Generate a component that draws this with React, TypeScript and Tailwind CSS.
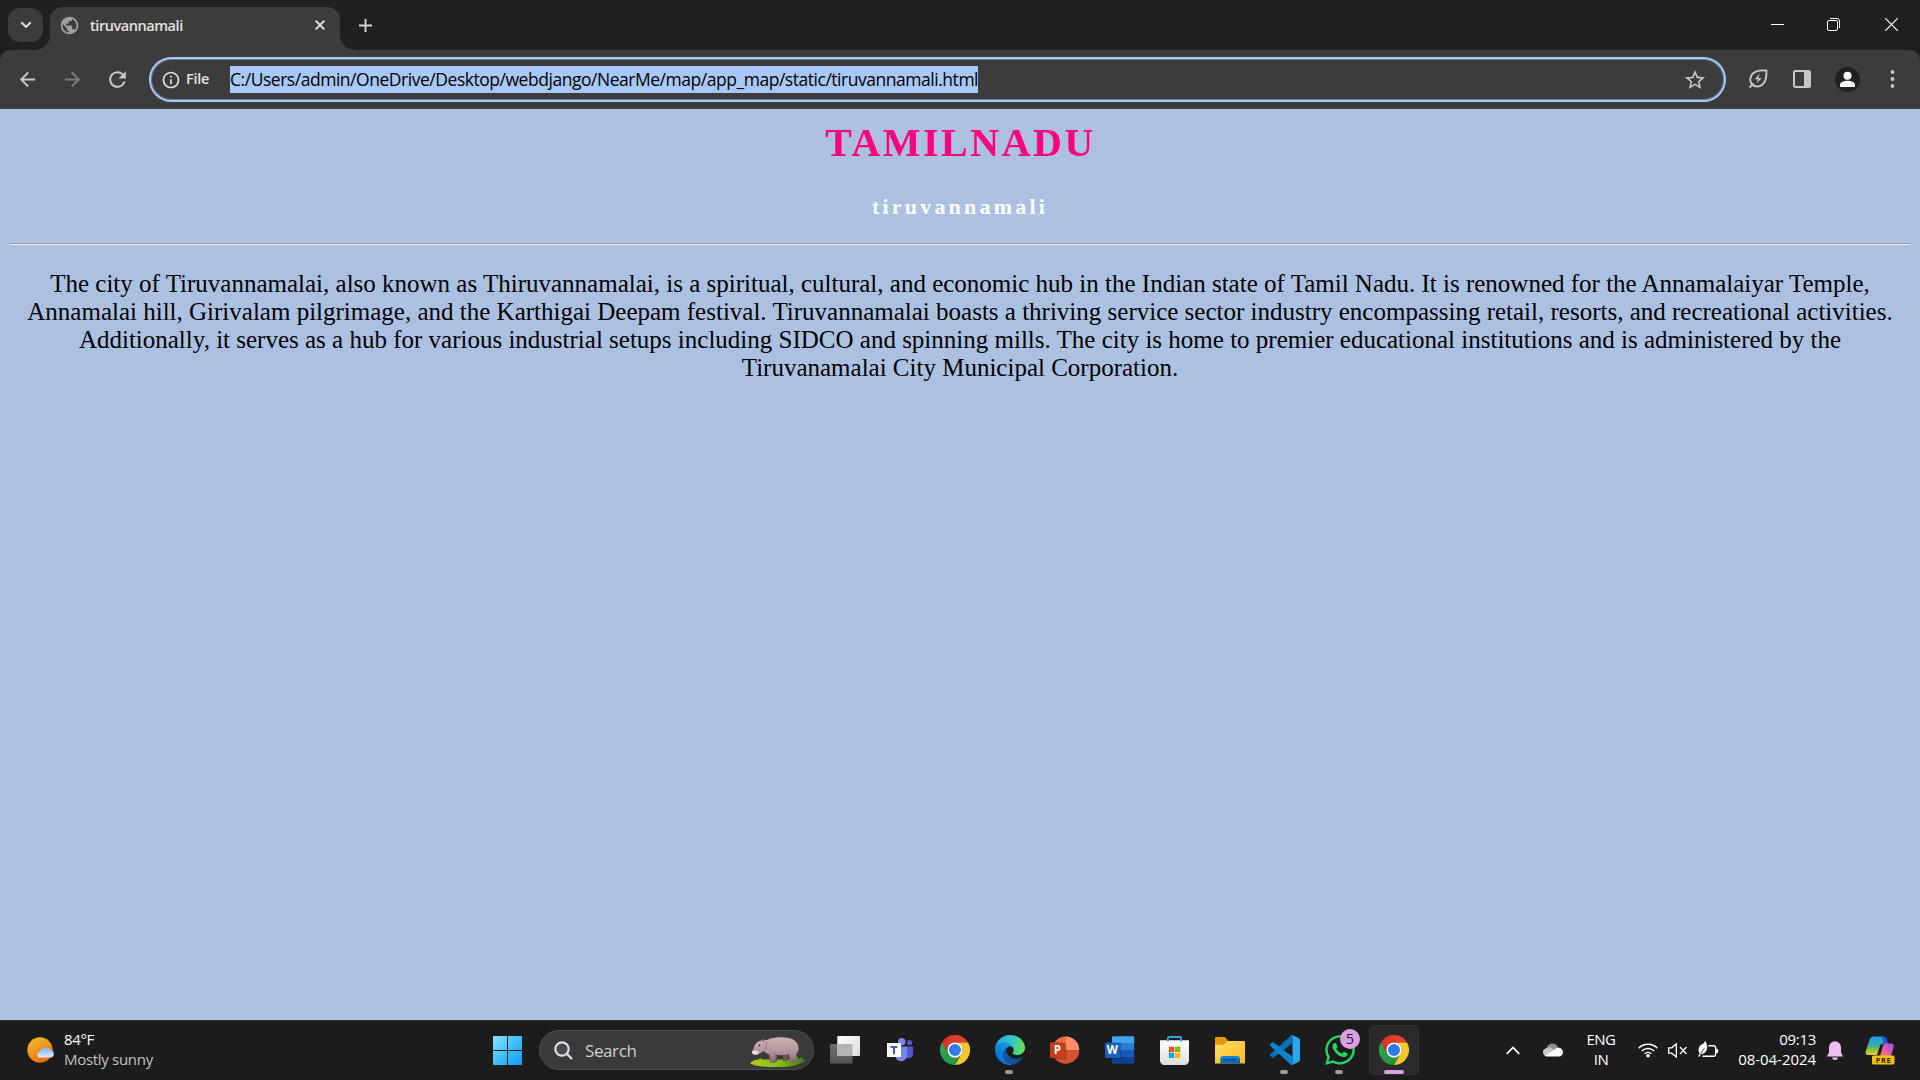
import React from "react";
import {
  MdArrowBack,
  MdArrowForward,
  MdInfoOutline,
  MdPublic,
  MdRefresh,
  MdStarBorder,
} from "react-icons/md";
import { FaWhatsapp } from "react-icons/fa";

/* ---------- Taskbar icons ---------- */

function WindowsIcon() {
  return (
    <svg width="30" height="30" viewBox="0 0 30 30">
      <defs>
        <linearGradient id="win" x1="0" y1="0" x2="30" y2="30" gradientUnits="userSpaceOnUse">
          <stop offset="0" stopColor="#8fe3ff" />
          <stop offset="0.5" stopColor="#3fc1fb" />
          <stop offset="1" stopColor="#0d97f8" />
        </linearGradient>
      </defs>
      <path
        fill="url(#win)"
        d="M1 1H14V15H0V2a1 1 0 0 1 1-1zM15 1H28a1 1 0 0 1 1 1V15H15zM0 16H14V30H1a1 1 0 0 1-1-1zM15 16H29V29a1 1 0 0 1-1 1H15z"
      />
    </svg>
  );
}

function TaskViewIcon() {
  return (
    <svg width="30" height="30" viewBox="0 0 30 30">
      <defs>
        <linearGradient id="tvA" x1="0" y1="0" x2="1" y2="1">
          <stop offset="0" stopColor="#ffffff" />
          <stop offset="1" stopColor="#dcdcdc" />
        </linearGradient>
        <linearGradient id="tvB" x1="0" y1="0" x2="0" y2="1">
          <stop offset="0" stopColor="#6e6e6e" />
          <stop offset="1" stopColor="#565656" />
        </linearGradient>
      </defs>
      <rect x="0" y="9" width="22.5" height="19.5" rx="1" fill="url(#tvB)" />
      <rect x="7.3" y="1" width="22.7" height="20" rx="1" fill="url(#tvA)" />
      <path d="M7.3 9H22.5V21H8.3a1 1 0 0 1-1-1z" fill="#b4b4b4" />
    </svg>
  );
}

function TeamsIcon() {
  return (
    <svg width="30" height="30" viewBox="0 0 30 30">
      <circle cx="16.8" cy="6.8" r="3.7" fill="#7b83eb" />
      <circle cx="24.6" cy="7.6" r="2.6" fill="#5059c9" />
      <path d="M21.5 11.5h6.6v7.2a4.6 4.6 0 0 1-6.6 4z" fill="#5059c9" />
      <path d="M10 11.5h12.2v8.6a6.1 6.1 0 0 1-12.2 0z" fill="#7b83eb" />
      <rect x="2" y="8" width="14" height="14" fill="#fff" />
      <path d="M5.6 11h6.8v1.9H10v6.4H8v-6.4H5.6z" fill="#4b53bc" />
    </svg>
  );
}

function ChromeIcon() {
  return (
    <svg width="30" height="30" viewBox="0 0 48 48">
      <defs>
        <linearGradient id="chR" x1="0" y1="0" x2="1" y2="0">
          <stop offset="0" stopColor="#d93025" />
          <stop offset="1" stopColor="#ea4335" />
        </linearGradient>
        <linearGradient id="chG" x1="1" y1="1" x2="0" y2="0">
          <stop offset="0" stopColor="#1e8e3e" />
          <stop offset="1" stopColor="#34a853" />
        </linearGradient>
      </defs>
      <path d="M3.2 12A24 24 0 0 1 44.8 12H24A12 12 0 0 0 13.6 30z" fill="url(#chR)" />
      <path d="M3.2 12A24 24 0 0 0 24 48L34.4 30A12 12 0 0 1 13.6 30z" fill="url(#chG)" />
      <path d="M44.8 12A24 24 0 0 1 24 48L34.4 30A12 12 0 0 0 24 12z" fill="#fcc629" />
      <circle cx="24" cy="24" r="12.2" fill="#fff" />
      <circle cx="24" cy="24" r="9.6" fill="#2f7bea" />
    </svg>
  );
}

function EdgeIcon() {
  return (
    <svg width="30" height="30" viewBox="0 0 256 256">
      <defs>
        <linearGradient id="edA" x1="58" y1="177" x2="237" y2="177" gradientUnits="userSpaceOnUse">
          <stop offset="0" stopColor="#0c59a4" />
          <stop offset="1" stopColor="#114a8b" />
        </linearGradient>
        <linearGradient id="edB" x1="157" y1="100" x2="46" y2="221" gradientUnits="userSpaceOnUse">
          <stop offset="0" stopColor="#1b9de2" />
          <stop offset="0.16" stopColor="#1595df" />
          <stop offset="0.67" stopColor="#0680d7" />
          <stop offset="1" stopColor="#0078d4" />
        </linearGradient>
        <linearGradient id="edC" x1="10" y1="60" x2="250" y2="110" gradientUnits="userSpaceOnUse">
          <stop offset="0" stopColor="#2ba9e3" />
          <stop offset="0.5" stopColor="#2fc2cf" />
          <stop offset="0.8" stopColor="#4bd884" />
          <stop offset="1" stopColor="#6be050" />
        </linearGradient>
      </defs>
      <path fill="url(#edA)" d="M231.07 190.54c-3.4 1.78-6.92 3.33-10.54 4.63a101.88 101.88 0 0 1-35.9 6.46c-47.31 0-88.52-32.54-88.52-74.31A31.48 31.48 0 0 1 112.54 99.9c-42.8 1.8-53.8 46.4-53.8 72.53 0 73.88 68.09 81.37 82.76 81.37 7.91 0 19.84-2.3 27-4.56l1.31-.44a128.34 128.34 0 0 0 66.6-52.8 4 4 0 0 0-5.34-5.46z" />
      <path fill="url(#edB)" d="M105.73 241.42a79.2 79.2 0 0 1-22.74-21.34 80.72 80.72 0 0 1 29.55-120.18c3.12-1.47 8.45-4.13 15.54-4a32.35 32.35 0 0 1 25.69 13 31.88 31.88 0 0 1 6.36 18.66c0-.21 24.46-79.6-80-79.6-43.9 0-80 41.66-80 78.21a130.15 130.15 0 0 0 12.11 56 128 128 0 0 0 156.38 67.11 75.55 75.55 0 0 1-62.78-8z" />
      <path fill="url(#edC)" d="M152.33 148.86c-.81 1.05-3.3 2.5-3.3 5.66 0 2.61 1.7 5.12 4.72 7.23 14.38 10 41.49 8.68 41.56 8.68a59.56 59.56 0 0 0 30.27-8.35A61.38 61.38 0 0 0 256 109.18c.26-22.41-8-37.31-11.34-43.91C223.46 23.84 177.72 0 128 0A128 128 0 0 0 0 126.2c.48-36.54 36.8-66.05 80-66.05 3.5 0 23.46.34 42 10.07 16.34 8.58 24.9 18.94 30.85 29.21 6.18 10.67 7.28 24.15 7.28 29.52 0 5.37-2.74 13.33-7.8 19.91z" />
    </svg>
  );
}

function OfficeLetter({ children }: { children: string }) {
  return (
    <text x="7.4" y="19" textAnchor="middle" fontFamily="Open Sans, sans-serif" fontWeight="700" fontSize="11.5" fill="#fff">
      {children}
    </text>
  );
}

function PowerPointIcon() {
  return (
    <svg width="30" height="30" viewBox="0 0 30 30">
      <circle cx="15.6" cy="15" r="13.6" fill="#ed6c47" />
      <path d="M15.6 1.4A13.6 13.6 0 0 1 29.2 15H15.6z" fill="#ff8f6b" />
      <path d="M2 15A13.6 13.6 0 0 0 29.2 15z" fill="#d35230" />
      <rect x="2.5" y="8.2" width="14" height="16" rx="1.5" fill="#000" opacity="0.2" />
      <rect x="0" y="7.5" width="15.3" height="15.5" rx="1.4" fill="#c43e1c" />
      <OfficeLetter>P</OfficeLetter>
    </svg>
  );
}

function WordIcon() {
  return (
    <svg width="30" height="30" viewBox="0 0 30 30">
      <path d="M7 2.4a1.2 1.2 0 0 1 1.2-1.2H28a1.2 1.2 0 0 1 1.2 1.2V8H7z" fill="#41a5ee" />
      <rect x="7" y="8" width="22.2" height="7" fill="#2b7cd3" />
      <rect x="7" y="15" width="22.2" height="7" fill="#185abd" />
      <path d="M7 22h22.2v5.6a1.2 1.2 0 0 1-1.2 1.2H8.2A1.2 1.2 0 0 1 7 27.6z" fill="#103f91" />
      <rect x="7" y="8" width="9.5" height="16" rx="1" fill="#000" opacity="0.2" />
      <rect x="0" y="7.5" width="15.3" height="15.5" rx="1.4" fill="#1b5dbf" />
      <OfficeLetter>W</OfficeLetter>
    </svg>
  );
}

function StoreIcon() {
  return (
    <svg width="30" height="30" viewBox="0 0 30 30">
      <defs>
        <linearGradient id="store" x1="0" y1="0" x2="0" y2="1">
          <stop offset="0" stopColor="#ffffff" />
          <stop offset="1" stopColor="#dedede" />
        </linearGradient>
      </defs>
      <path d="M0 5.3H29V25.5a4.5 4.5 0 0 1-4.5 4.5H4.5a4.5 4.5 0 0 1-4.5-4.5z" fill="url(#store)" />
      <path d="M7.9 6.5V3a1 1 0 0 1 1-1H20.1a1 1 0 0 1 1 1V6.5" fill="none" stroke="#26a9e6" strokeWidth="1.8" />
      <rect x="8.9" y="11.7" width="5.3" height="5.3" fill="#f25022" />
      <rect x="15" y="11.7" width="5.3" height="5.3" fill="#7fba00" />
      <rect x="8.9" y="17.8" width="5.3" height="5.3" fill="#00a4ef" />
      <rect x="15" y="17.8" width="5.3" height="5.3" fill="#ffb900" />
    </svg>
  );
}

function FolderIcon() {
  return (
    <svg width="30" height="30" viewBox="0 0 30 30">
      <defs>
        <linearGradient id="fold" x1="0" y1="0" x2="1" y2="1">
          <stop offset="0" stopColor="#ffdc6b" />
          <stop offset="1" stopColor="#fbbc1c" />
        </linearGradient>
        <linearGradient id="foldB" x1="0" y1="0" x2="0" y2="1">
          <stop offset="0" stopColor="#1389da" />
          <stop offset="1" stopColor="#0b62ae" />
        </linearGradient>
      </defs>
      <path d="M0 3.3A1.3 1.3 0 0 1 1.3 2H9.8l3.2 3.6V10H0z" fill="#e09c08" />
      <path d="M0 9.8H8.8L13 6H28.7A1.3 1.3 0 0 1 30 7.3V28.5H0z" fill="url(#fold)" />
      <path d="M5.3 28.5V24a3 3 0 0 1 3-3H22a3 3 0 0 1 3 3v4.5z" fill="url(#foldB)" />
      <rect x="8.3" y="24" width="13.5" height="1.3" fill="#0a4686" />
    </svg>
  );
}

function VSCodeIcon() {
  return (
    <svg width="30" height="30" viewBox="0 0 24 24">
      <path d="M18.004 6.552 3 18a1 1 0 0 1-1.35-.06L.327 16.74a1 1 0 0 1 0-1.48L16.505.5a1.5 1.5 0 0 1 1.5.9z" fill="#0b6fb8" />
      <path d="M18.004 17.448 2.925 6.002a1 1 0 0 0-1.276.057L.327 7.261A1 1 0 0 0 .326 8.74L16.506 23.5a1.5 1.5 0 0 0 1.5-.5z" fill="#1083cf" />
      <path d="M23.15 2.587 18.21.21a1.494 1.494 0 0 0-1.705.29c.6-.4 1.499 0 1.499.9V22.6c0 .9-.9 1.3-1.498.9a1.492 1.492 0 0 0 1.704.29l4.942-2.377A1.5 1.5 0 0 0 24 20.06V3.939a1.5 1.5 0 0 0-.85-1.352z" fill="#2ba7ef" />
    </svg>
  );
}

function HippoIcon() {
  return (
    <svg width="56" height="32" viewBox="0 0 56 32">
      <defs>
        <linearGradient id="hip" x1="0" y1="0" x2="0" y2="1">
          <stop offset="0" stopColor="#cbb0b1" />
          <stop offset="0.5" stopColor="#b79a9d" />
          <stop offset="1" stopColor="#806568" />
        </linearGradient>
        <linearGradient id="grass" x1="0" y1="0" x2="1" y2="0">
          <stop offset="0" stopColor="#b5cf1e" />
          <stop offset="0.5" stopColor="#86bd1c" />
          <stop offset="1" stopColor="#3f7a1c" />
        </linearGradient>
      </defs>
      <path d="M0 27c3-2.5 6-3.500 9-3.500l1-1.500 2 1.500h30l5-5 1 4 5-1-1 2.500 4-.5c-4 5-14 7.500-28 7.500-12 0-24-.5-28-4z" fill="url(#grass)" />
      <path d="M33 16h5v9h-5zM24 17h3v9h-3z" fill="#6b5356" />
      <path d="M17 4C22 .5 40 0 44.500 4.500 50 9 49.500 14 46 18.500V26h-5.500l-2-8c-4 1.500-9 1.500-13 .5V27H19.500v-8c-3-1-4.500-3-5.500-4l-6 3.500c-3 1-6-.5-5.500-3L5 8.500C7 5 12 3.500 17 4z" fill="url(#hip)" />
      <path d="M2 15.500c1-1.500 5-1.500 7 1l-2 2c-3 1-5.500-.5-5-3z" fill="#f0dcd4" />
      <path d="M12 4.200c1-1.500 2.500-1 3 .3l-1 2.500z" fill="#9a7b80" />
      <path d="M17 6c-1 4-.5 9-3.500 9" fill="none" stroke="#94777b" strokeWidth="0.9" />
      <circle cx="9.5" cy="9.5" r="0.9" fill="#3b2b2e" />
    </svg>
  );
}

function WeatherIcon() {
  return (
    <svg width="28" height="26" viewBox="0 0 28 26">
      <defs>
        <linearGradient id="sun" x1="0.2" y1="0" x2="0.7" y2="1">
          <stop offset="0" stopColor="#f0be2e" />
          <stop offset="1" stopColor="#f2660e" />
        </linearGradient>
        <linearGradient id="cld" x1="0" y1="0" x2="0" y2="1">
          <stop offset="0" stopColor="#82adf0" />
          <stop offset="1" stopColor="#dbe9fd" />
        </linearGradient>
      </defs>
      <circle cx="13" cy="13" r="12.7" fill="url(#sun)" />
      <path d="M13.5 20.5a3 3 0 0 1-.3-6 5.600 5.600 0 0 1 10.300-1.500 3.900 3.900 0 0 1 .8 7.500z" fill="url(#cld)" />
    </svg>
  );
}

function CopilotIcon() {
  return (
    <svg width="30" height="30" viewBox="0 0 30 30">
      <defs>
        <linearGradient id="cpA" x1="0" y1="0" x2="0" y2="1">
          <stop offset="0" stopColor="#1f9df0" />
          <stop offset="0.45" stopColor="#35a9a0" />
          <stop offset="0.75" stopColor="#8bc53f" />
          <stop offset="1" stopColor="#f3c72b" />
        </linearGradient>
        <linearGradient id="cpB" x1="1" y1="0" x2="0" y2="1">
          <stop offset="0" stopColor="#8f54ea" />
          <stop offset="0.5" stopColor="#e358b5" />
          <stop offset="1" stopColor="#fb8350" />
        </linearGradient>
      </defs>
      <path d="M8.5 1.5H18c2 0 3 1 3.600 3L23 9h-5.500c-1.500 0-2.200.8-2.700 2.200L12 20H3c-2 0-2.800-1.500-2.300-3.500L4.500 5C5.200 2.700 6.500 1.500 8.500 1.500z" fill="url(#cpA)" />
      <path d="M16 1.500h2c2 0 3 1 3.600 3L23 9h-4.500c-1-3.500-.8-6.500-2.500-7.500z" fill="#1857d8" />
      <path d="M20 8.500h6.200c2.200 0 3 1.500 2.400 3.500L26 21H15l3-10c.4-1.500 1-2.500 2-2.500z" fill="url(#cpB)" />
      <rect x="7" y="20.5" width="22.5" height="9" rx="1.5" fill="#fbc00c" />
      <text x="18.5" y="27.7" textAnchor="middle" fontFamily="Open Sans, sans-serif" fontWeight="700" fontSize="7.4" letterSpacing="0.6" fill="#1c1c1c">
        PRE
      </text>
    </svg>
  );
}

/* ---------- Browser chrome ---------- */

function TabStrip() {
  return (
    <div className="flex h-[50px] bg-[#1f2121]">
      <button className="mt-2 ml-2 flex h-[34px] w-[35px] items-center justify-center rounded-[12px] bg-[#3c3c3c]">
        <svg width="12" height="8" viewBox="0 0 12 8" fill="none" stroke="#e3e3e3" strokeWidth="2">
          <path d="M1.3 1.2 6 5.9l4.7-4.7" />
        </svg>
      </button>
      <svg className="mt-auto -ml-[8px]" width="15" height="15" viewBox="0 0 15 15">
        <path d="M15 0V15H0A15 15 0 0 0 15 0z" fill="#3c3c3c" />
      </svg>
      <div className="mt-[7px] flex w-[290px] items-center rounded-t-[13px] bg-[#3c3c3c] pb-[7px] pl-[9px]">
        <MdPublic size={21} color="#9aa0a6" />
        <span className="mt-[2px] ml-[10px] text-[14.5px] font-semibold tracking-[-0.45px] text-[#e3e3e3]">tiruvannamali</span>
        <svg className="mr-[15px] ml-auto" width="10" height="10" viewBox="0 0 10 10" stroke="#e3e3e3" strokeWidth="1.9">
          <path d="M.7.7l8.6 8.6M9.3.7.7 9.3" />
        </svg>
      </div>
      <svg className="mt-auto" width="15" height="15" viewBox="0 0 15 15">
        <path d="M0 0V15H15A15 15 0 0 1 0 0z" fill="#3c3c3c" />
      </svg>
      <svg className="mt-[19px] ml-[4px]" width="13" height="13" viewBox="0 0 13 13" stroke="#d5d5d5" strokeWidth="1.9">
        <path d="M6.5 0V13M0 6.5H13" />
      </svg>
      <div className="ml-auto flex h-[49px] items-center">
        <div className="flex w-[57px] justify-center">
          <svg width="13" height="1" viewBox="0 0 13 1">
            <rect width="13" height="1" fill="#fff" />
          </svg>
        </div>
        <div className="flex w-[57px] justify-center pr-[2px]">
          <svg width="13" height="13" viewBox="0 0 13 13" fill="none" stroke="#fff" strokeWidth="1">
            <rect x="0.5" y="2.5" width="10" height="10" rx="1.5" />
            <path d="M3 .5h7a2.5 2.5 0 0 1 2.5 2.5v7" />
          </svg>
        </div>
        <div className="flex w-[57px] justify-center">
          <svg width="13" height="13" viewBox="0 0 13 13" stroke="#fff" strokeWidth="1.2">
            <path d="M.3.3l12.4 12.4M12.7.3.3 12.7" />
          </svg>
        </div>
      </div>
    </div>
  );
}

function ToolButton({ children }: { children: React.ReactNode }) {
  return <div className="flex w-[45px] justify-center pb-[1px]">{children}</div>;
}

function Toolbar() {
  return (
    <div className="bg-[#1f2121]">
      <div className="flex h-[59px] items-center rounded-t-[10px] bg-[#3c3c3c] pl-[5px]">
        <ToolButton>
          <MdArrowBack size={23} color="#c7c7c7" />
        </ToolButton>
        <ToolButton>
          <MdArrowForward size={23} color="#7b7b7b" />
        </ToolButton>
        <ToolButton>
          <MdRefresh size={25} color="#c7c7c7" />
        </ToolButton>
        <div className="ml-[9px] flex h-[45px] w-[1577px] items-center rounded-full border-2 border-[#a8c7fa] pr-[17px] pl-[10px] shadow-[inset_0_0_0_1px_#6b7b96]">
          <MdInfoOutline size={20} color="#e3e3e3" />
          <span className="mb-[1px] ml-[5px] w-[44px] text-[14.5px] font-semibold tracking-[-0.3px] text-[#e3e3e3]">File</span>
          <span className="flex h-[27px] items-center bg-[#a8c7fa] text-[17.5px] tracking-[-0.467px] whitespace-nowrap text-black">
            C:/Users/admin/OneDrive/Desktop/webdjango/NearMe/map/app_map/static/tiruvannamali.html
          </span>
          <MdStarBorder className="ml-auto" size={24} color="#c7c7c7" />
        </div>
        <div className="ml-[9px] flex items-center">
          <ToolButton>
            <svg width="20" height="20" viewBox="0 0 20 20" fill="none" stroke="#c7c7c7" strokeWidth="1.9">
              <path d="M18.3 1.5C11 .8 3 2.5 2.3 10c-.2 4.5 3 7.7 7.2 7.500C17 17 19 9 18.300 1.500zM5.500 14.500 1.500 18.500" />
              <path d="M11.700 4.500 6.800 10.200h3.200L8.600 14.600 13.600 9h-3.300z" fill="#c7c7c7" stroke="none" />
            </svg>
          </ToolButton>
          <ToolButton>
            <svg width="19" height="18" viewBox="0 0 19 18">
              <rect x="1" y="1" width="16" height="16" rx="1.5" fill="none" stroke="#c7c7c7" strokeWidth="2" />
              <rect x="11" y="1" width="6" height="16" fill="#c7c7c7" />
            </svg>
          </ToolButton>
          <ToolButton>
            <svg width="25" height="25" viewBox="0 0 25 25">
              <circle cx="12.5" cy="12.5" r="12.5" fill="#1f2121" />
              <circle cx="12.5" cy="8.8" r="4" fill="#fff" />
              <path d="M5 20v-2.200c0-2.600 4.500-4 7.500-4s7.500 1.400 7.500 4V20z" fill="#fff" />
            </svg>
          </ToolButton>
          <ToolButton>
            <svg width="5" height="18" viewBox="0 0 5 18" fill="#c7c7c7">
              <circle cx="2.5" cy="2" r="1.9" />
              <circle cx="2.5" cy="9" r="1.9" />
              <circle cx="2.5" cy="16" r="1.9" />
            </svg>
          </ToolButton>
        </div>
      </div>
    </div>
  );
}

/* ---------- Page ---------- */

function Page() {
  return (
    <main className="h-[911px] bg-[#acc1e2] px-[10px] pt-[11px] text-center font-['Liberation_Serif',serif]">
      <h1 className="h-[45px] pl-[1px] text-[40px] leading-[45px] font-bold tracking-[2.5px] text-[#ff007f]">TAMILNADU</h1>
      <h3 className="mt-[28px] h-[27px] text-[22px] leading-[28px] font-bold tracking-[3.2px] text-white">tiruvannamali</h3>
      <div className="mt-[23px] h-[2px] border-t border-b border-t-[#9a9a9a] border-b-[#eeeeee]" />
      <p className="mt-[25px] text-[25px] leading-[28px] text-black">
        The city of Tiruvannamalai, also known as Thiruvannamalai, is a spiritual, cultural, and economic hub in the Indian state of Tamil Nadu. It is renowned for the Annamalaiyar Temple, Annamalai hill, Girivalam pilgrimage, and the Karthigai Deepam festival. Tiruvannamalai boasts a thriving service sector industry encompassing retail, resorts, and recreational activities. Additionally, it serves as a hub for various industrial setups including SIDCO and spinning mills. The city is home to premier educational institutions and is administered by the Tiruvanamalai City Municipal Corporation.
      </p>
    </main>
  );
}

/* ---------- Taskbar ---------- */

function TaskbarApp({ children, running }: { children: React.ReactNode; running?: boolean }) {
  return (
    <div className="relative flex h-[60px] w-[55px] items-center justify-center">
      {children}
      {running && <div className="absolute bottom-[6px] left-[23px] h-[4px] w-[8px] rounded-full bg-[#9a9a9a]" />}
    </div>
  );
}

function Taskbar() {
  return (
    <footer className="flex h-[60px] items-center bg-[#1c1c1c] text-[15px] leading-[20px] text-white shadow-[inset_0_1px_0_#333638]">
      <div className="flex w-[480px] items-center pl-[27px]">
        <WeatherIcon />
        <div className="mb-[3px] ml-[9px]">
          <div className="tracking-[-0.35px]">84°F</div>
          <div className="tracking-[-0.3px] text-[#c3c3c3]">Mostly sunny</div>
        </div>
      </div>
      <TaskbarApp>
        <WindowsIcon />
      </TaskbarApp>
      <div className="ml-[4px] flex h-[40px] w-[275px] items-center rounded-full border border-[#4e4e4e] bg-[#3a3a3a] pr-[7px] pl-[14px]">
        <svg width="19" height="19" viewBox="0 0 19 19" fill="none" stroke="#dcdfe6" strokeWidth="2.2">
          <circle cx="8" cy="8" r="6.7" fill="#4a4a4d" />
          <path d="M12.9 12.9 18 18" />
        </svg>
        <span className="mt-[1px] ml-[12px] text-[17px] tracking-[-0.4px] text-[#cfcfcf]">Search</span>
        <div className="mt-[4px] ml-auto">
          <HippoIcon />
        </div>
      </div>
      <div className="ml-[3px] flex">
        <TaskbarApp>
          <TaskViewIcon />
        </TaskbarApp>
        <TaskbarApp>
          <TeamsIcon />
        </TaskbarApp>
        <TaskbarApp>
          <ChromeIcon />
        </TaskbarApp>
        <TaskbarApp running>
          <EdgeIcon />
        </TaskbarApp>
        <TaskbarApp>
          <PowerPointIcon />
        </TaskbarApp>
        <TaskbarApp>
          <WordIcon />
        </TaskbarApp>
        <TaskbarApp>
          <StoreIcon />
        </TaskbarApp>
        <TaskbarApp>
          <FolderIcon />
        </TaskbarApp>
        <TaskbarApp running>
          <VSCodeIcon />
        </TaskbarApp>
        <TaskbarApp running>
          <FaWhatsapp size={34} color="#25d366" />
          <div className="absolute top-[9px] left-[28px] flex h-[20px] w-[20px] items-center justify-center rounded-full bg-[#dc9fe6] text-[14.5px] text-[#1c1c1c]">
            5
          </div>
        </TaskbarApp>
        <div className="relative my-[5px] ml-[2px] flex h-[50px] w-[50px] items-center justify-center rounded-[5px] border border-[#323232] bg-[#2a2a2a]">
          <ChromeIcon />
          <div className="absolute bottom-0 left-[14px] h-[4px] w-[20px] rounded-full bg-[#dc9fe6]" />
        </div>
      </div>
      <div className="ml-auto flex items-center">
        <svg width="14" height="9" viewBox="0 0 14 9" fill="none" stroke="#fff" strokeWidth="1.7">
          <path d="M.8 7.9 7 1.5l6.2 6.4" />
        </svg>
        <svg className="ml-[23px]" width="20" height="14" viewBox="0 0 20 14">
          <path d="M3.5 6.5C4 2.5 6.5.5 9.5.5c2.800 0 4.500 1.500 5.500 4L9 9z" fill="#8f8f8f" />
          <path d="M4 5c2-.8 4-.3 5.500 1L15 9.500 3 13C-1.500 11.500-1 5.800 4 5z" fill="#c8c8c8" />
          <path d="M9 8.500l4-3.200c3-1.800 7 .4 7 4 0 2.500-1.800 4.200-4 4.200H4.200c-1.200 0-2-.4-2.700-1z" fill="#fff" />
        </svg>
        <div className="mb-[2px] ml-[22px] w-[32px] text-center tracking-[-0.5px]">
          <div>ENG</div>
          <div>IN</div>
        </div>
        <svg className="ml-[21px]" width="20" height="16" viewBox="0 0 20 16" fill="none" stroke="#fff" strokeWidth="1.5">
          <path d="M.7 6.200a13 13 0 0 1 18.600 0M3.800 9a8.700 8.700 0 0 1 12.400 0M6.700 11.800a4.700 4.700 0 0 1 6.600 0" />
          <circle cx="10" cy="13.8" r="1.8" fill="#fff" stroke="none" />
        </svg>
        <svg className="ml-[10px]" width="20" height="15" viewBox="0 0 20 15" fill="none" stroke="#fff" strokeWidth="1.3">
          <path d="M.7 4.800h3L8.300.9v13.200L3.700 10.200h-3z" />
          <path d="M12 4l6.500 7M18.500 4 12 11" />
        </svg>
        <svg className="mb-[2px] ml-[10px]" width="21" height="17" viewBox="0 0 21 17" fill="none">
          <path d="M10.5 4.700h5A2.200 2.200 0 0 1 17.700 6.900v6.200a2.200 2.200 0 0 1-2.200 2.200H4.500" stroke="#fff" strokeWidth="1.4" />
          <path d="M18 8h1.200a1.200 1.200 0 0 1 1 1.200v1.700a1.200 1.200 0 0 1-1 1.200H18z" fill="#fff" />
          <path d="M7.300 0C10 4.500 10 10.500 5.500 12.500L3 13.200 1.200 16 .2 15.200 1.500 12.500C-1 8 1.500 3.500 5 3z" fill="#fff" />
          <path d="M2 13.500 6 7.500" stroke="#1c1c1c" strokeWidth="0.8" />
        </svg>
        <div className="mb-[3px] ml-[12px] w-[85px] text-right">
          <div className="tracking-[-0.3px]">09:13</div>
          <div className="tracking-[-0.05px]">08-04-2024</div>
        </div>
        <svg className="ml-[11px]" width="16" height="19" viewBox="0 0 16 19" fill="#f0bcf4">
          <path d="M8 .2a6 6 0 0 1 6 6v5l1.700 3.500c.2.500 0 .9-.5.900H.8c-.5 0-.7-.4-.5-.900L2 11.200v-5a6 6 0 0 1 6-6z" />
          <path d="M5.200 16.600h5.600a2.800 2.400 0 0 1-5.600 0z" />
        </svg>
        <div className="mr-[25px] ml-[22px]">
          <CopilotIcon />
        </div>
      </div>
    </footer>
  );
}

export default function App() {
  return (
    <div className="h-[1080px] w-[1920px] overflow-hidden font-['Open_Sans',sans-serif]">
      <TabStrip />
      <Toolbar />
      <Page />
      <Taskbar />
    </div>
  );
}
